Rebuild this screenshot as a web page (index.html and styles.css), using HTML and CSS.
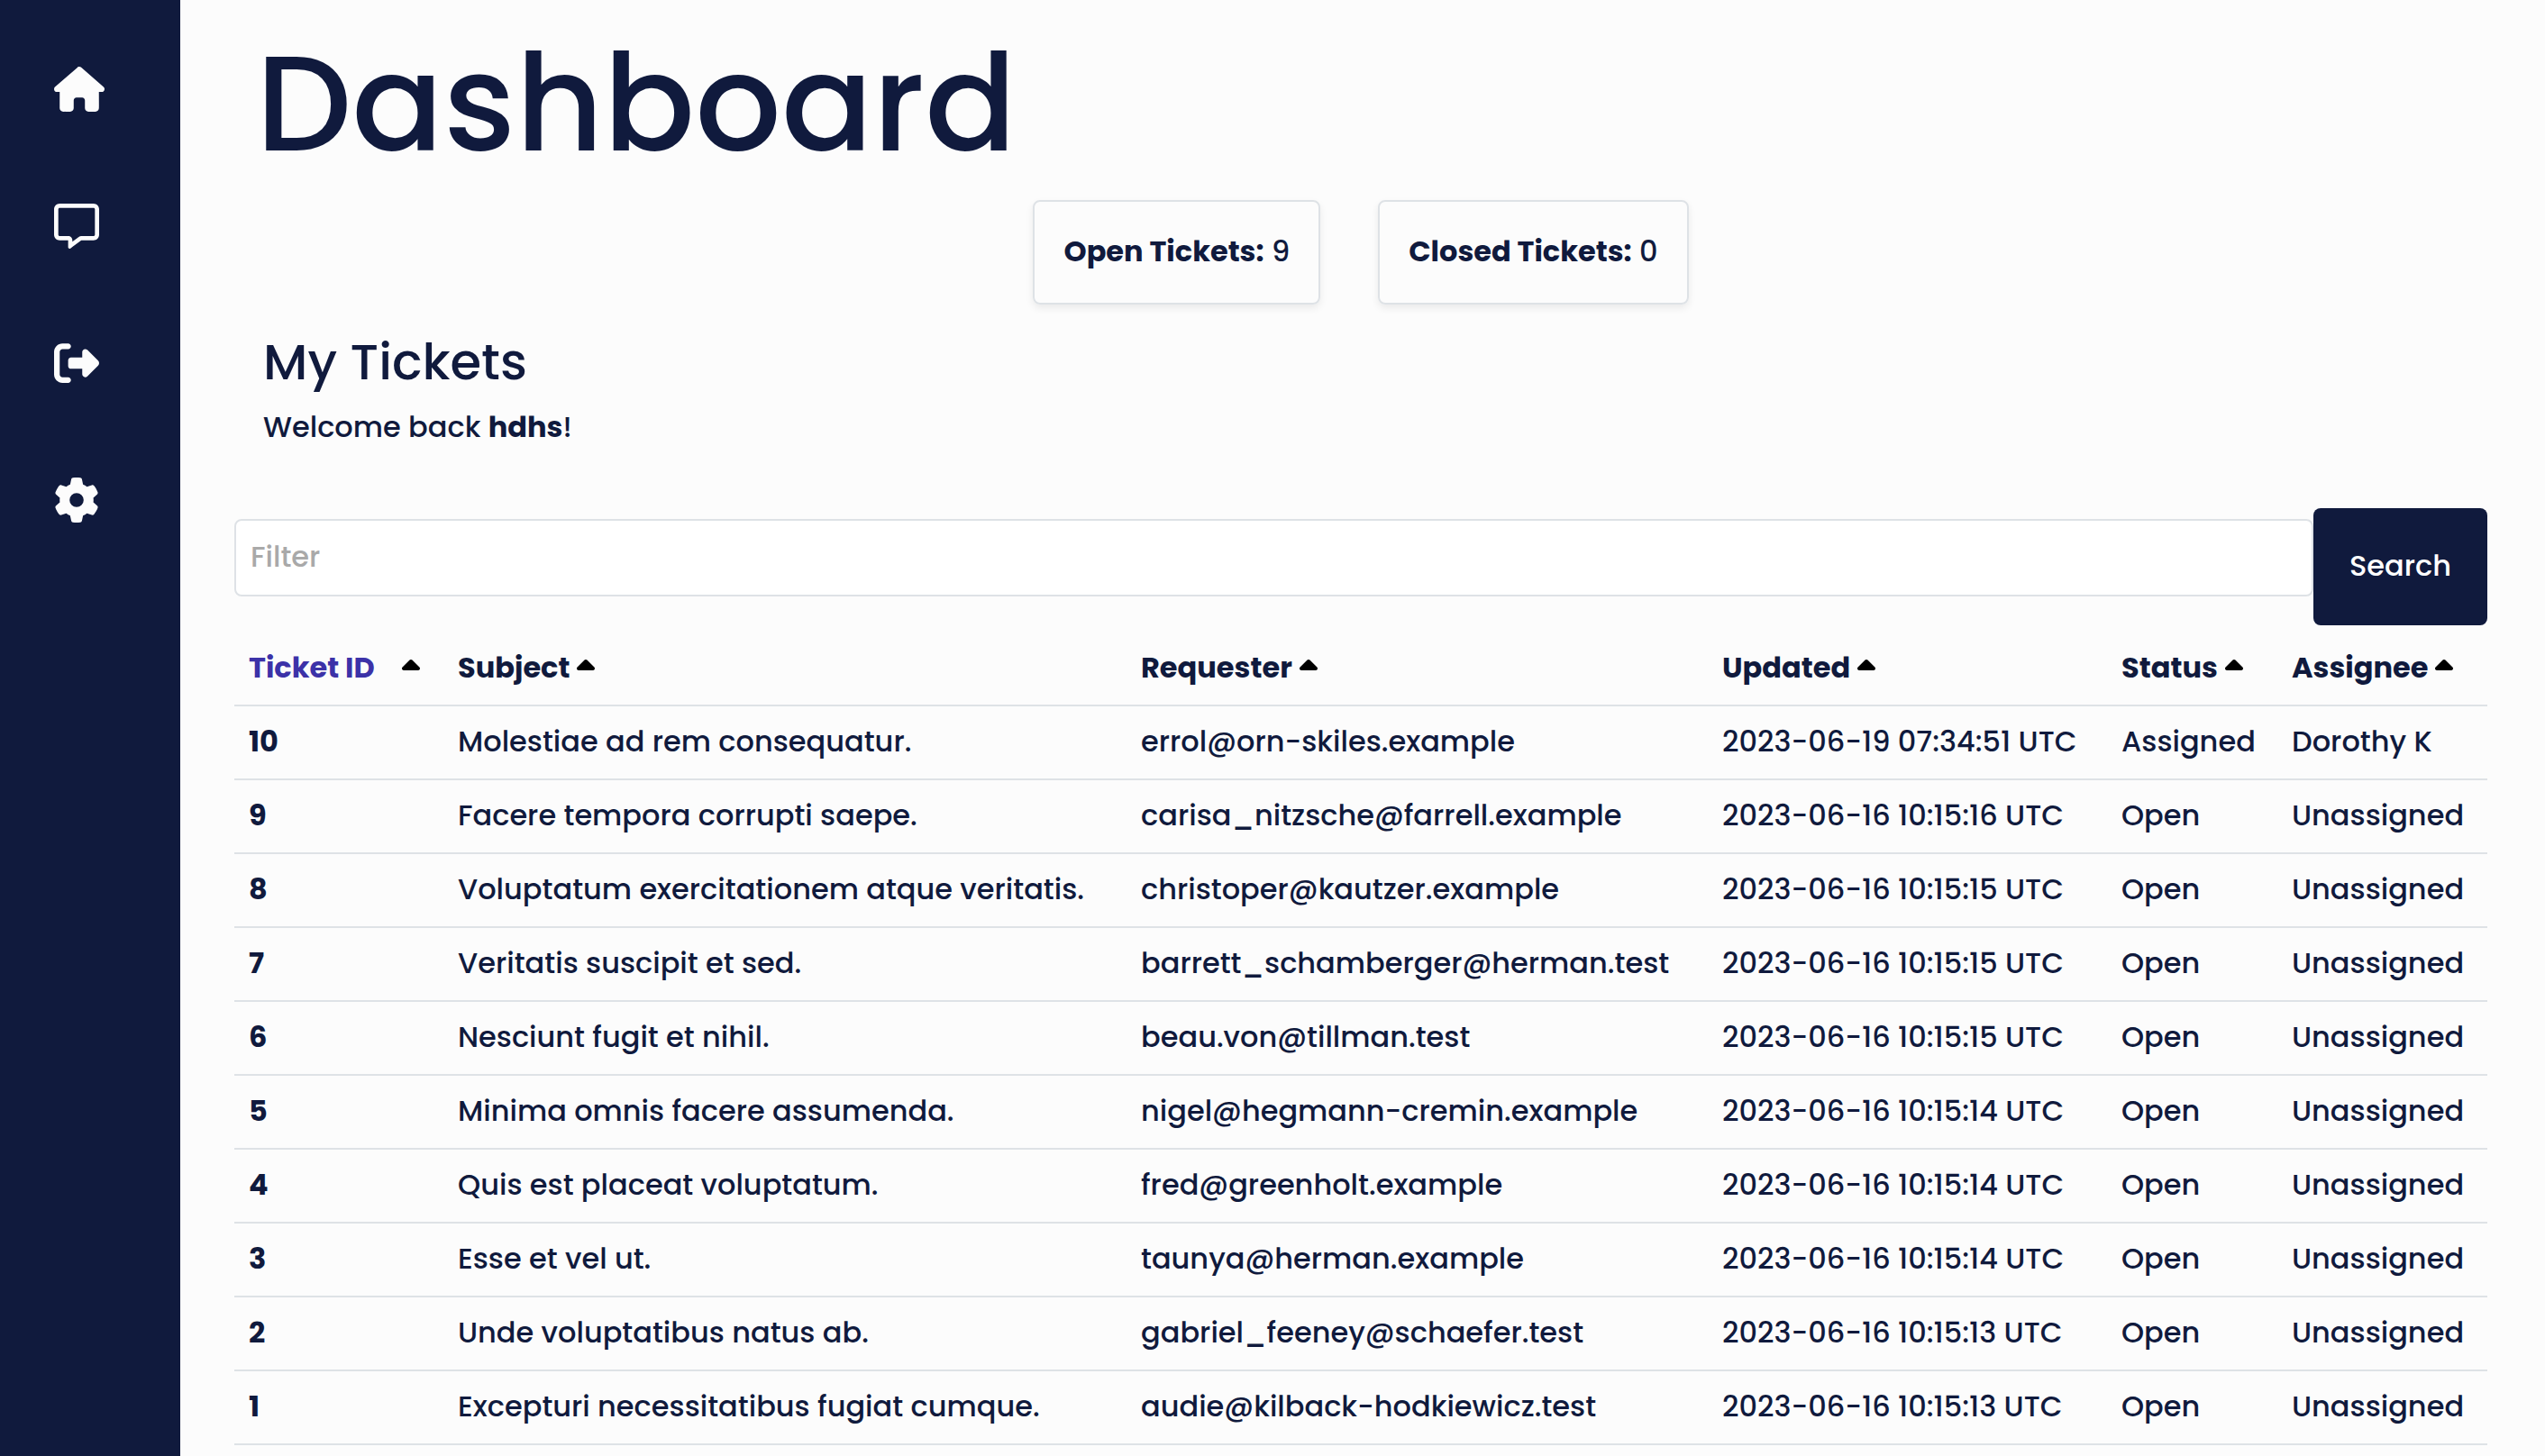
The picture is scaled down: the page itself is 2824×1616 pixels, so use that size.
FILE: index.html
```html
<!DOCTYPE html>
<html lang="en">
<head>
<meta charset="utf-8">
<meta name="viewport" content="width=device-width, initial-scale=1">
<title>Dashboard</title>
<link rel="stylesheet" href="styles.css">
</head>
<body>
<svg class="sprite" aria-hidden="true">
  <symbol id="caret" viewBox="0 128 320 192"><path d="M182.600 137.400c-12.500-12.500-32.800-12.500-45.300 0l-128 128c-9.200 9.200-11.900 22.900-6.900 34.900s16.600 19.800 29.600 19.800H288c12.900 0 24.600-7.800 29.600-19.800s2.200-25.700-6.900-34.900l-128-128z"/></symbol>
</svg>
<div class="layout">
  <nav class="sidebar" aria-label="Main">
    <a href="#" aria-label="Home"><svg class="icon icon-wide" viewBox="0 0 576 512"><path d="M575.8 255.5c0 18-15 32.1-32 32.1h-32l.7 160.2c0 2.7-.2 5.4-.5 8.1V472c0 22.1-17.900 40-40 40H456c-1.100 0-2.200 0-3.300-.1c-1.400 .1-2.800 .1-4.200 .1H416 392c-22.100 0-40-17.900-40-40V448 384c0-17.700-14.300-32-32-32H256c-17.700 0-32 14.300-32 32v64 24c0 22.100-17.900 40-40 40H160 128.100c-1.500 0-3-.1-4.500-.2c-1.200 .1-2.400 .2-3.600 .2H104c-22.100 0-40-17.900-40-40V360c0-.9 0-1.900 .1-2.800V287.600H32c-18 0-32-14-32-32.100c0-9 3-17 10-24L266.400 8c7-7 15-8 22-8s15 2 21 7L564.800 231.500c8 7 12 15 11 24z"/></svg></a>
    <a href="#" aria-label="Messages"><svg class="icon" viewBox="0 0 512 512"><path d="M160 368c26.500 0 48 21.500 48 48v16l72.500-54.400c8.300-6.200 18.400-9.600 28.800-9.600H448c8.800 0 16-7.200 16-16V64c0-8.800-7.200-16-16-16H64c-8.800 0-16 7.200-16 16V352c0 8.800 7.200 16 16 16h96zm48 124l-.2 .2-5.100 3.800-17.100 12.800c-4.800 3.600-11.300 4.200-16.800 1.500s-8.800-8.200-8.800-14.300V474.700v-6.400V468v-4V416H112 64c-35.300 0-64-28.700-64-64V64C0 28.700 28.700 0 64 0H448c35.300 0 64 28.700 64 64V352c0 35.300-28.700 64-64 64H309.300L208 492z"/></svg></a>
    <a href="#" aria-label="Sign out"><svg class="icon" viewBox="0 0 512 512"><path d="M377.900 105.900L500.700 228.700c7.200 7.200 11.300 17.100 11.300 27.300s-4.100 20.100-11.300 27.300L377.900 406.100c-6.400 6.400-15 9.900-24 9.900c-18.700 0-33.900-15.200-33.900-33.900l0-62.100-128 0c-17.700 0-32-14.300-32-32l0-64c0-17.700 14.300-32 32-32l128 0 0-62.100c0-18.700 15.200-33.900 33.900-33.900c9 0 17.600 3.600 24 9.900zM160 96L96 96c-17.700 0-32 14.300-32 32l0 256c0 17.700 14.300 32 32 32l64 0c17.700 0 32 14.300 32 32s-14.300 32-32 32l-64 0c-53 0-96-43-96-96L0 128C0 75 43 32 96 32l64 0c17.700 0 32 14.300 32 32s-14.300 32-32 32z"/></svg></a>
    <a href="#" aria-label="Settings"><svg class="icon" viewBox="0 0 512 512"><path d="M495.900 166.600c3.200 8.700 .5 18.400-6.400 24.600l-43.300 39.400c1.100 8.300 1.700 16.800 1.700 25.400s-.6 17.100-1.700 25.400l43.300 39.400c6.900 6.200 9.600 15.900 6.400 24.600c-4.400 11.900-9.700 23.300-15.800 34.300l-4.700 8.100c-6.600 11-14 21.400-22.100 31.200c-5.900 7.200-15.700 9.600-24.500 6.800l-55.700-17.700c-13.400 10.300-28.200 18.900-44 25.400l-12.500 57.100c-2 9.100-9 16.300-18.200 17.800c-13.800 2.300-28 3.500-42.500 3.500s-28.700-1.200-42.500-3.500c-9.200-1.500-16.200-8.700-18.200-17.800l-12.500-57.100c-15.800-6.500-30.600-15.100-44-25.400L83.100 425.900c-8.800 2.800-18.600 .3-24.500-6.800c-8.100-9.800-15.500-20.200-22.100-31.200l-4.700-8.100c-6.100-11-11.400-22.400-15.800-34.300c-3.200-8.700-.5-18.400 6.400-24.600l43.300-39.400C64.600 273.100 64 264.600 64 256s.6-17.100 1.700-25.400L22.400 191.200c-6.900-6.200-9.600-15.900-6.400-24.600c4.400-11.900 9.700-23.300 15.800-34.300l4.700-8.100c6.600-11 14-21.400 22.100-31.200c5.900-7.200 15.700-9.600 24.500-6.800l55.700 17.700c13.400-10.300 28.200-18.900 44-25.400l12.500-57.100c2-9.100 9-16.300 18.200-17.800C227.300 1.200 241.500 0 256 0s28.700 1.200 42.500 3.500c9.200 1.500 16.200 8.700 18.200 17.800l12.500 57.100c15.800 6.500 30.600 15.100 44 25.400l55.700-17.700c8.800-2.800 18.600-.3 24.500 6.800c8.100 9.800 15.500 20.200 22.100 31.200l4.700 8.100c6.100 11 11.400 22.400 15.800 34.300zM256 336a80 80 0 1 0 0-160 80 80 0 1 0 0 160z"/></svg></a>
  </nav>
  <main class="content">
    <h1>Dashboard</h1>
    <section class="stats" aria-label="Ticket counts">
      <p class="card"><strong>Open Tickets:</strong> 9</p>
      <p class="card"><strong>Closed Tickets:</strong> 0</p>
    </section>
    <header class="intro">
      <h2>My Tickets</h2>
      <p>Welcome back <strong>hdhs</strong>!</p>
    </header>
    <form class="search">
      <input type="text" name="filter" placeholder="Filter" aria-label="Filter">
      <button type="button">Search</button>
    </form>
    <table class="tickets">
      <colgroup><col class="col-id"><col><col class="col-requester"><col class="col-updated"><col class="col-status"><col class="col-assignee"></colgroup>
      <thead>
        <tr>
          <th scope="col"><a class="sort sort-active" href="#">Ticket ID <svg class="caret" aria-hidden="true"><use href="#caret"/></svg></a></th>
          <th scope="col"><a class="sort" href="#">Subject <svg class="caret" aria-hidden="true"><use href="#caret"/></svg></a></th>
          <th scope="col"><a class="sort" href="#">Requester <svg class="caret" aria-hidden="true"><use href="#caret"/></svg></a></th>
          <th scope="col"><a class="sort" href="#">Updated <svg class="caret" aria-hidden="true"><use href="#caret"/></svg></a></th>
          <th scope="col"><a class="sort" href="#">Status <svg class="caret" aria-hidden="true"><use href="#caret"/></svg></a></th>
          <th scope="col"><a class="sort" href="#">Assignee <svg class="caret" aria-hidden="true"><use href="#caret"/></svg></a></th>
        </tr>
      </thead>
      <tbody>
        <tr><th scope="row">10</th><td>Molestiae ad rem consequatur.</td><td>errol@orn-skiles.example</td><td>2023-06-19 07:34:51 UTC</td><td>Assigned</td><td>Dorothy K</td></tr>
        <tr><th scope="row">9</th><td>Facere tempora corrupti saepe.</td><td>carisa_nitzsche@farrell.example</td><td>2023-06-16 10:15:16 UTC</td><td>Open</td><td>Unassigned</td></tr>
        <tr><th scope="row">8</th><td>Voluptatum exercitationem atque veritatis.</td><td>christoper@kautzer.example</td><td>2023-06-16 10:15:15 UTC</td><td>Open</td><td>Unassigned</td></tr>
        <tr><th scope="row">7</th><td>Veritatis suscipit et sed.</td><td>barrett_schamberger@herman.test</td><td>2023-06-16 10:15:15 UTC</td><td>Open</td><td>Unassigned</td></tr>
        <tr><th scope="row">6</th><td>Nesciunt fugit et nihil.</td><td>beau.von@tillman.test</td><td>2023-06-16 10:15:15 UTC</td><td>Open</td><td>Unassigned</td></tr>
        <tr><th scope="row">5</th><td>Minima omnis facere assumenda.</td><td>nigel@hegmann-cremin.example</td><td>2023-06-16 10:15:14 UTC</td><td>Open</td><td>Unassigned</td></tr>
        <tr><th scope="row">4</th><td>Quis est placeat voluptatum.</td><td>fred@greenholt.example</td><td>2023-06-16 10:15:14 UTC</td><td>Open</td><td>Unassigned</td></tr>
        <tr><th scope="row">3</th><td>Esse et vel ut.</td><td>taunya@herman.example</td><td>2023-06-16 10:15:14 UTC</td><td>Open</td><td>Unassigned</td></tr>
        <tr><th scope="row">2</th><td>Unde voluptatibus natus ab.</td><td>gabriel_feeney@schaefer.test</td><td>2023-06-16 10:15:13 UTC</td><td>Open</td><td>Unassigned</td></tr>
        <tr><th scope="row">1</th><td>Excepturi necessitatibus fugiat cumque.</td><td>audie@kilback-hodkiewicz.test</td><td>2023-06-16 10:15:13 UTC</td><td>Open</td><td>Unassigned</td></tr>
      </tbody>
    </table>
  </main>
</div>
</body>
</html>
```
FILE: styles.css
```css
:root {
  --navy: #101a3d;
  --paper: #fcfcfc;
  --line: #dee2e6;
  --accent: #3c32a8;
}

* { box-sizing: border-box; }

body {
  margin: 0;
  background: var(--paper);
  color: var(--navy);
  font: 500 32px/48px Poppins, Inter, sans-serif;
}

h1, h2, p { margin: 0; font-weight: 500; }
strong { font-weight: 700; }
.sprite { position: absolute; width: 0; height: 0; }

.layout { display: flex; min-height: 100vh; }

.sidebar {
  flex: none;
  width: 200px;
  padding: 74px 60px;
  display: flex;
  flex-direction: column;
  gap: 102px;
  background: var(--navy);
}
.sidebar a { display: block; height: 50px; color: var(--paper); }
.icon { display: block; width: 50px; height: 50px; fill: currentColor; }
.icon-wide { width: 56px; }

.content { flex: 1; min-width: 0; padding: 24px 64px 0 60px; }

h1 { padding-left: 24px; font-size: 150px; line-height: 182px; }

.stats { display: flex; justify-content: center; gap: 64px; padding: 16px 0; }
.card {
  padding: 31px 32px 33px;
  border: 2px solid var(--line);
  border-radius: 8px;
  box-shadow: 0 4px 8px rgba(0, 0, 0, 0.075);
}

.intro { padding: 16px 32px 66px; }
h2 { margin-bottom: 16px; font-size: 56px; line-height: 64px; }

.search { display: flex; align-items: flex-start; }
.search input {
  flex: 1;
  min-width: 0;
  height: 86px;
  margin: 12px 0 0;
  padding: 0 16px 2px;
  border: 2px solid var(--line);
  border-radius: 8px;
  background: #fff;
  color: inherit;
  font: inherit;
}
.search input::placeholder { color: #a9a9a9; opacity: 1; }
.search button {
  height: 130px;
  padding: 0 40px 2px;
  border: 0;
  border-radius: 8px;
  background: var(--navy);
  color: #fff;
  font: inherit;
}

.tickets {
  width: 100%;
  margin-top: 8px;
  border-collapse: separate;
  border-spacing: 0;
  table-layout: fixed;
  text-align: left;
}
.col-id { width: 232px; }
.col-requester { width: 645px; }
.col-updated { width: 443px; }
.col-status { width: 189px; }
.col-assignee { width: 233px; }
.tickets th, .tickets td {
  height: 82px;
  padding: 15px 0 17px 16px;
  border-bottom: 2px solid var(--line);
  font-weight: 500;
  white-space: nowrap;
}
.tickets th { font-weight: 700; }

.sort { display: flex; align-items: center; gap: 8px; color: inherit; text-decoration: none; }
.sort-active { gap: 30px; color: var(--accent); }
.caret { width: 20px; height: 12px; margin-bottom: 6px; fill: #000; }
```
